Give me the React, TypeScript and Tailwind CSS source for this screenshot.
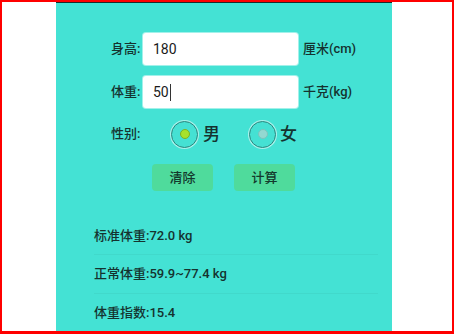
import React from "react";

const font = { fontFamily: 'Roboto, "Noto Sans CJK SC", sans-serif' };

function Radio({ checked }: { checked: boolean }) {
  return (
    <div className="w-[27px] h-[27px] rounded-full border-[1.5px] border-[#2a867d] shadow-[0_0_0_1px_rgba(255,255,255,0.55)] flex items-center justify-center bg-[#45e1d3]">
      {checked ? (
        <div className="w-[10px] h-[10px] rounded-full bg-[#a8e12c] border border-[#7db226]" />
      ) : (
        <div className="w-[10px] h-[10px] rounded-full bg-[#93d8d1] border border-[#7cc5be]" />
      )}
    </div>
  );
}

export default function App() {
  return (
    <div className="w-[454px] h-[334px] bg-white border-2 border-[#ff0000] border-b-[3px] overflow-hidden" style={font}>
      <div className="ml-[54px] w-[336px] h-full bg-[#44e2d4] border-t-[1.5px] border-[#1d2b2a] text-[#15322f] text-[13px] font-medium">
        <div className="pt-[30px] pl-[55px] flex flex-col">
          <div className="flex items-center h-[32px]">
            <span className="w-[32px]">身高:</span>
            <div className="w-[155px] h-[32px] bg-white rounded-[3px] shadow-[0_0_0_1px_rgba(255,255,255,0.5)] flex items-center pl-[10px] text-[14px] font-normal text-[#1a1a1a]">
              180
            </div>
            <span className="ml-[5px]">厘米(cm)</span>
          </div>
          <div className="flex items-center h-[32px] mt-[11px]">
            <span className="w-[32px]">体重:</span>
            <div className="w-[155px] h-[32px] bg-white rounded-[3px] shadow-[0_0_0_1px_rgba(255,255,255,0.5)] flex items-center pl-[10px] text-[14px] font-normal text-[#1a1a1a]">
              50<span className="w-px h-[17px] bg-[#333] ml-px" />
            </div>
            <span className="ml-[5px]">千克(kg)</span>
          </div>
          <div className="flex items-center h-[28px] mt-[12px]">
            <span className="w-[60px]">性别:</span>
            <Radio checked />
            <span className="ml-[5px] text-[17px] leading-none">男</span>
            <div className="ml-[29px]">
              <Radio checked={false} />
            </div>
            <span className="ml-[4px] text-[17px] leading-none">女</span>
          </div>
        </div>
        <div className="flex mt-[16px] pl-[96px] gap-[21px]">
          <div className="w-[61px] h-[27px] rounded-[4px] bg-[#4fdb9c] flex items-center justify-center text-[#133a2c]">清除</div>
          <div className="w-[61px] h-[27px] rounded-[4px] bg-[#4fdb9c] flex items-center justify-center text-[#133a2c]">计算</div>
        </div>
        <div className="mt-[26px] pl-[38px] pr-[14px] flex flex-col">
          <div className="h-[38px] flex items-center border-b border-[#41d9cb]">标准体重:72.0 kg</div>
          <div className="h-[39px] flex items-center border-b border-[#41d9cb]">正常体重:59.9~77.4 kg</div>
          <div className="h-[39px] flex items-center border-b border-[#41d9cb]">体重指数:15.4</div>
        </div>
      </div>
    </div>
  );
}
